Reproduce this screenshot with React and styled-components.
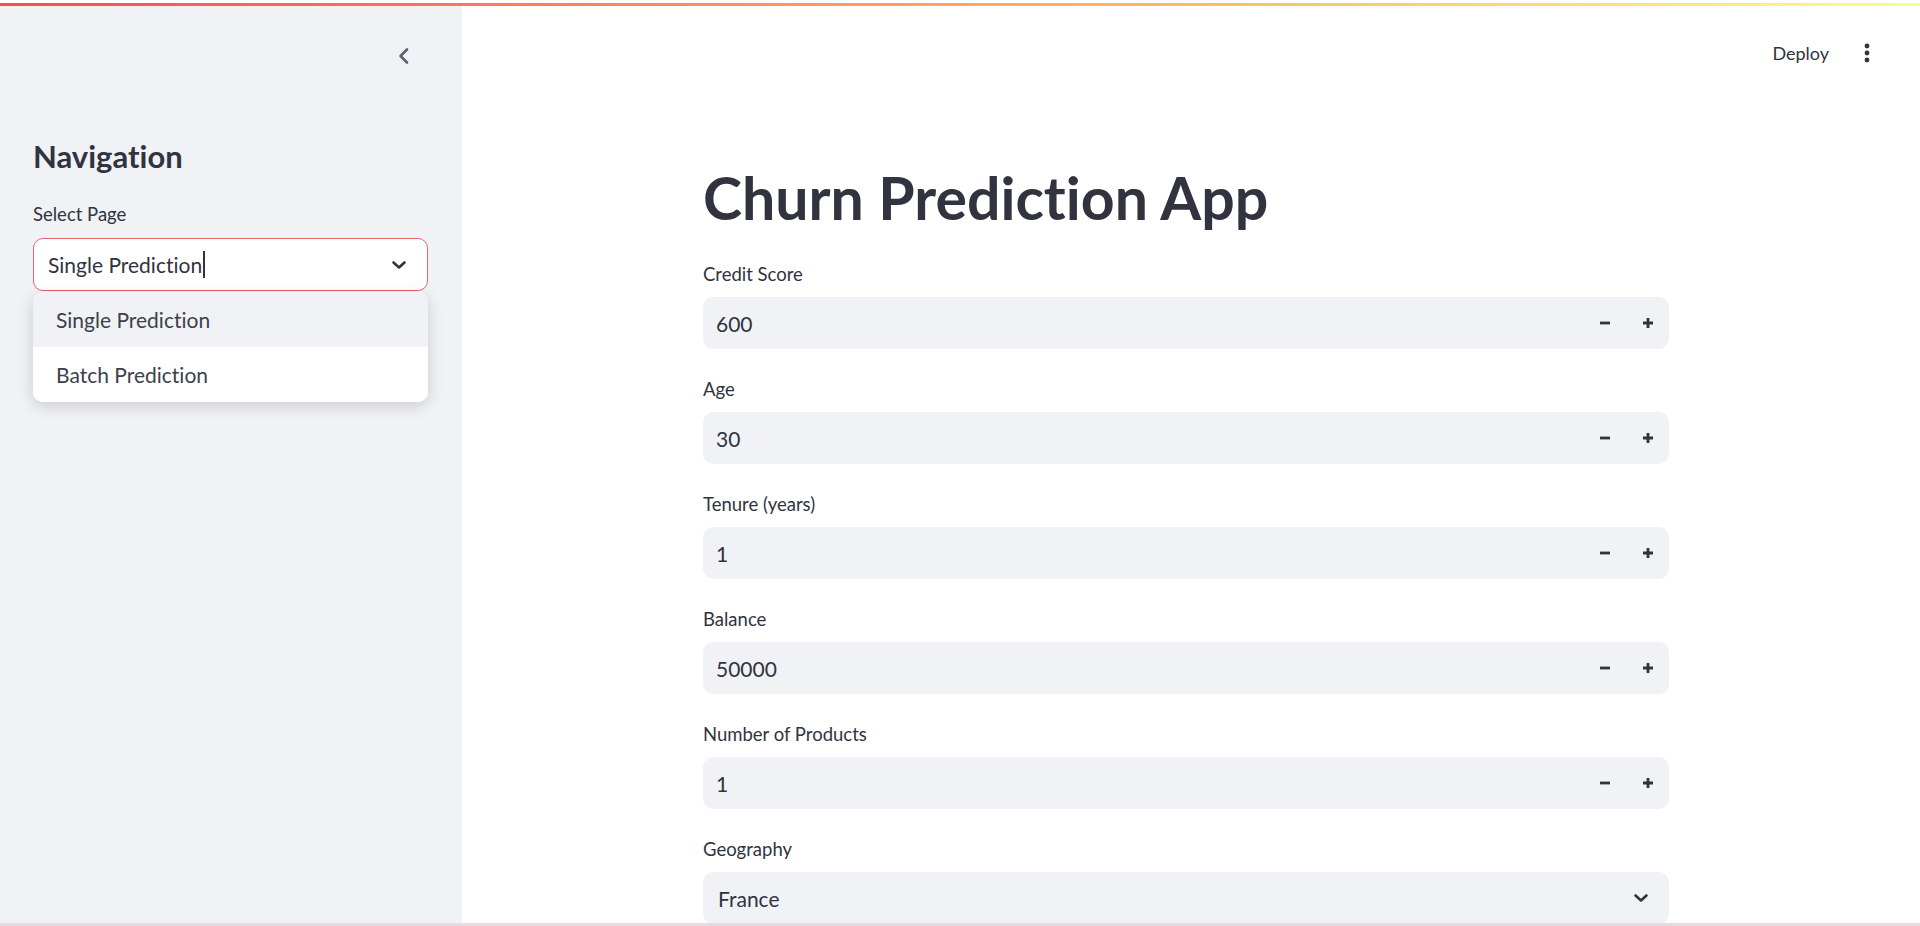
import styled, { createGlobalStyle } from "styled-components"

const GlobalStyle = createGlobalStyle`
  html, body {
    margin: 0;
    padding: 0;
    background: #ffffff;
  }
  body {
    font-family: Lato, "Noto Sans", sans-serif;
    font-variant-ligatures: no-common-ligatures;
    color: #31333f;
  }
  * {
    box-sizing: border-box;
  }
`

const Page = styled.div`
  height: 926px;
  display: flex;
  flex-direction: column;
  overflow: hidden;
`
const Decoration = styled.div`
  flex-shrink: 0;
  height: 3px;
  margin-top: 3px;
  background: linear-gradient(90deg, rgb(255, 75, 75), rgb(255, 253, 128));
`
const Body = styled.div`
  flex: 1;
  min-height: 0;
  display: flex;
`
const BottomStrip = styled.div`
  flex-shrink: 0;
  height: 3px;
  background: #e4dcdf;
`
const Sidebar = styled.aside`
  width: 462px;
  flex-shrink: 0;
  background: #f0f2f6;
  padding: 0 34px 0 33px;
  display: flex;
  flex-direction: column;
`
const SidebarTop = styled.div`
  height: 100px;
  display: flex;
  justify-content: flex-end;
  align-items: center;
`
const IconButton = styled.button`
  width: ${(p) => p.$w || 40}px;
  height: 40px;
  display: flex;
  align-items: center;
  justify-content: center;
  border: none;
  background: transparent;
  padding: 0;
`
const SideHeading = styled.h2`
  margin: 32px 0 0;
  font-size: 31px;
  font-weight: 700;
  line-height: 1.2;
  color: #31333f;
`
const Label = styled.div`
  font-size: 18.5px;
  line-height: 30px;
  color: #31333f;
  margin-top: ${(p) => p.$top || 0}px;
  margin-bottom: ${(p) => p.$bottom || 8}px;
`
const SelectWrap = styled.div`
  position: relative;
`
const SelectBox = styled.div`
  height: ${(p) => (p.$focused ? 53 : 52)}px;
  display: flex;
  align-items: center;
  justify-content: space-between;
  background: ${(p) => (p.$focused ? "#ffffff" : "#f0f2f6")};
  border: 1px solid ${(p) => (p.$focused ? "#e8646a" : "transparent")};
  border-radius: 10px;
  padding: 0 ${(p) => p.$right}px 0 14px;
  font-size: 21px;
  color: #31333f;
`
const ValueText = styled.div`
  display: flex;
  align-items: center;
`
const Caret = styled.span`
  display: inline-block;
  width: 1.5px;
  height: 27px;
  margin-left: 1px;
  background: #31333f;
`
const Menu = styled.div`
  position: absolute;
  top: calc(100% + 1px);
  left: 0;
  right: 0;
  background: #ffffff;
  border-radius: 10px;
  box-shadow: rgba(0, 0, 0, 0.16) 0 4px 16px;
  overflow: hidden;
  z-index: 10;
`
const MenuItem = styled.div`
  height: 55px;
  display: flex;
  align-items: center;
  padding-left: 23px;
  font-size: 21px;
  color: #3d3f4a;
  background: ${(p) => (p.$active ? "#f0f2f6" : "#ffffff")};
`
const Main = styled.main`
  flex: 1;
  min-width: 0;
  display: flex;
  flex-direction: column;
  background: #ffffff;
`
const MainHeader = styled.header`
  height: 94px;
  flex-shrink: 0;
  display: flex;
  justify-content: flex-end;
  align-items: center;
  gap: 4px;
  padding-right: 33px;
`
const DeployButton = styled.button`
  height: 40px;
  padding: 0 14px;
  border: none;
  background: transparent;
  font-family: Lato, "Noto Sans", sans-serif;
  font-size: 18px;
  color: #31333f;
`
const ContentWrap = styled.div`
  padding-right: 10px;
`
const Content = styled.div`
  width: 966px;
  margin: 0 auto;
  padding-top: 62px;
`
const Title = styled.h1`
  margin: 0 0 25px;
  font-size: 59px;
  font-weight: 700;
  line-height: 72px;
  color: #31333f;
`
const Field = styled.div`
  margin-bottom: 25px;
`
const NumberBox = styled.div`
  height: 52px;
  display: flex;
  align-items: center;
  background: #f0f2f6;
  border-radius: 10px;
`
const NumberValue = styled.div`
  flex: 1;
  padding-left: 13px;
  font-size: 21px;
  color: #31333f;
`
const StepButton = styled.button`
  width: 43px;
  height: 52px;
  display: flex;
  align-items: center;
  justify-content: center;
  border: none;
  background: transparent;
  padding: 0;
`

const ChevronLeft = () => (
  <svg width="16" height="18" viewBox="0 0 16 18">
    <path d="M11 2.5 L4.5 9 L11 15.5" fill="none" stroke="#5f626d" strokeWidth="2.6" strokeLinecap="round" strokeLinejoin="round" />
  </svg>
)

const ChevronDown = () => (
  <svg width="16" height="10" viewBox="0 0 16 10">
    <path d="M2.5 2.5 L8 7.5 L13.5 2.5" fill="none" stroke="#31333f" strokeWidth="2.6" strokeLinecap="round" strokeLinejoin="round" />
  </svg>
)

const Minus = () => (
  <svg width="12" height="12" viewBox="0 0 12 12">
    <path d="M1 6 H11" stroke="#31333f" strokeWidth="2.8" />
  </svg>
)

const Plus = () => (
  <svg width="12" height="12" viewBox="0 0 12 12">
    <path d="M1 6 H11 M6 1 V11" stroke="#31333f" strokeWidth="2.8" />
  </svg>
)

const Kebab = () => (
  <svg width="6" height="20" viewBox="0 0 6 20">
    <circle cx="3" cy="3" r="2.4" fill="#31333f" />
    <circle cx="3" cy="10" r="2.4" fill="#31333f" />
    <circle cx="3" cy="17" r="2.4" fill="#31333f" />
  </svg>
)

const numberFields = [
  { label: "Credit Score", value: "600" },
  { label: "Age", value: "30" },
  { label: "Tenure (years)", value: "1" },
  { label: "Balance", value: "50000" },
  { label: "Number of Products", value: "1" },
]

const NumberField = ({ label, value }) => (
  <Field>
    <Label>{label}</Label>
    <NumberBox>
      <NumberValue>{value}</NumberValue>
      <StepButton><Minus /></StepButton>
      <StepButton><Plus /></StepButton>
    </NumberBox>
  </Field>
)

const App = () => {
  return (
    <Page>
      <GlobalStyle />
      <Decoration />
      <Body>
        <Sidebar>
          <SidebarTop>
            <IconButton $w={48}><ChevronLeft /></IconButton>
          </SidebarTop>
          <SideHeading>Navigation</SideHeading>
          <Label $top={24} $bottom={9}>Select Page</Label>
          <SelectWrap>
            <SelectBox $focused $right={20}>
              <ValueText>
                Single Prediction
                <Caret />
              </ValueText>
              <ChevronDown />
            </SelectBox>
            <Menu>
              <MenuItem $active>Single Prediction</MenuItem>
              <MenuItem>Batch Prediction</MenuItem>
            </Menu>
          </SelectWrap>
        </Sidebar>
        <Main>
          <MainHeader>
            <DeployButton>Deploy</DeployButton>
            <IconButton><Kebab /></IconButton>
          </MainHeader>
          <ContentWrap>
            <Content>
              <Title>Churn Prediction App</Title>
              {numberFields.map((f) => (
                <NumberField key={f.label} label={f.label} value={f.value} />
              ))}
              <Field>
                <Label>Geography</Label>
                <SelectBox $right={19}>
                  <ValueText>France</ValueText>
                  <ChevronDown />
                </SelectBox>
              </Field>
            </Content>
          </ContentWrap>
        </Main>
      </Body>
      <BottomStrip />
    </Page>
  )
}

export default App
